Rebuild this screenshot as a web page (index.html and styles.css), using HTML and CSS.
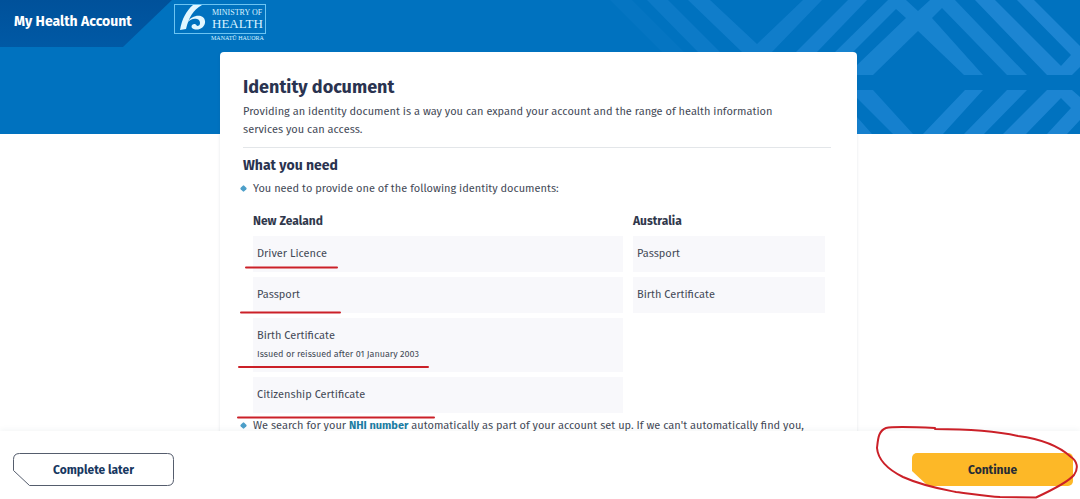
FILE: index.html
```html
<!DOCTYPE html>
<html lang="en">
<head>
<meta charset="utf-8">
<meta name="viewport" content="width=device-width, initial-scale=1">
<title>My Health Account – Identity document</title>
<link rel="stylesheet" href="styles.css">
</head>
<body>
<div class="app">
  <div class="hero" aria-hidden="true">
    <svg class="hero-pattern" width="480" height="134" viewBox="600 0 480 134">
      <g fill="#2e93e0">
        <path opacity=".1" d="M610 0H632L684 52H662Z"/>
        <path opacity=".25" d="M647 0H668L720 52H698Z"/>
        <path opacity=".35" d="M688 0H710L757 44L803 0H822L772 52H742Z"/>
        <path opacity=".45" d="M848 0H867L817 52H796Z"/>
        <path opacity=".5" d="M888 0H906L918 11L930 0H955L1027 75H1007L942 8L932 18L983 75H964L918 31L873 75H857V65L906 18L896 9L853 52H835Z"/>
        <path opacity=".6" d="M975 0H995L1061 66L1071 55L1017 0H1034L1080 46V67L1072 75H1047Z"/>
        <path opacity=".45" d="M857 90H873L913 134H893L857 98Z M857 117L872 134H857Z"/>
        <path opacity=".55" d="M965 90H983L943 134H923Z M1007 90H1027L984 134H964Z"/>
        <path opacity=".6" d="M1047 90H1072L1080 97V120L1067 134H1047L1071 108L1061 98L1026 134H1003Z"/>
      </g>
    </svg>
  </div>

  <header class="header">
    <a class="brand" href="#">My Health Account</a>
    <a class="ministry" href="#" aria-label="Ministry of Health, Manatū Hauora">
      <span class="ministry-box">
        <svg class="ministry-mark" width="28" height="26" viewBox="0 0 28 26" fill="#e2f7ff">
          <path d="M14 0H23C14 5 10 12 7 24L1 25C3 14 7 6 14 0Z"/>
          <path d="M9 17C12 10 25 8 26 16C27 23 18 27 13 23C11 20 16 17 18 21C22 21 22 15 18 14C14 13 11 15 9 17Z"/>
        </svg>
        <span class="ministry-name"><span class="ministry-small">MINISTRY OF</span><span class="ministry-big">HEALTH</span></span>
      </span>
      <span class="ministry-maori">MANATŪ HAUORA</span>
    </a>
  </header>

  <main class="main">
    <section class="card">
      <h1 class="title">Identity document</h1>
      <p class="lead">Providing an identity document is a way you can expand your account and the range of health information <br>services you can access.</p>
      <hr class="rule">
      <h2 class="subtitle">What you need</h2>
      <ul class="needs">
        <li class="need">
          You need to provide one of the following identity documents:
          <div class="countries">
            <section class="country">
              <h3 class="country-name">New Zealand</h3>
              <ul class="docs">
                <li class="doc">Driver Licence</li>
                <li class="doc">Passport</li>
                <li class="doc">Birth Certificate<small class="doc-note">Issued or reissued after 01 January 2003</small></li>
                <li class="doc">Citizenship Certificate</li>
              </ul>
            </section>
            <section class="country">
              <h3 class="country-name">Australia</h3>
              <ul class="docs">
                <li class="doc">Passport</li>
                <li class="doc">Birth Certificate</li>
              </ul>
            </section>
          </div>
        </li>
        <li class="need">We search for your <a class="link" href="#">NHI number</a> automatically as part of your account set up. If we can't automatically find you,</li>
      </ul>
    </section>
  </main>

  <footer class="footer">
    <button class="button button-later" type="button">
      <svg class="button-shape" width="161" height="33" viewBox="0 0 161 33" preserveAspectRatio="none" aria-hidden="true"><path d="M6.500 .5H154.500Q160.500 .5 160.500 6.500V26.500Q160.500 32.500 154.500 32.500H16.500L.5 17.500V6.500Q.5 .5 6.500 .5Z" fill="#fff" stroke="#555d6d"/></svg>
      <span class="button-label">Complete later</span>
    </button>
    <button class="button button-continue" type="button"><span class="button-label">Continue</span></button>
  </footer>

  <svg class="marks" width="1080" height="499" viewBox="0 0 1080 499" fill="none" stroke="#cb2028" stroke-width="2" stroke-linecap="round" aria-hidden="true">
    <path d="M246 267.500H337M241 312.500H340M239 367H428M238 417.500H434"/>
    <path d="M935 428C915 427 894 426 886 428C878 431 878 440 877 448C878 460 889 470 903 477C923 486 941 489 956 492C973 494 988 496 1000 497L1036 497.500C1050 491 1068 482 1074 475C1079 468 1077 461 1071 457C1059 446 1041 439 1018 436C996 431 964 429 935 429"/>
  </svg>
</div>
</body>
</html>
```
FILE: styles.css
```css
* {
  box-sizing: border-box;
}

body {
  margin: 0;
  background: #fff;
  color: #434956;
  font: 11px/18px "Fira Sans", "Noto Sans", sans-serif;
}

h1, h2, h3, p, ul {
  margin: 0;
  padding: 0;
}

ul {
  list-style: none;
}

.app {
  position: relative;
  display: flex;
  flex-direction: column;
  height: 100vh;
  overflow: hidden;
}

.hero {
  position: absolute;
  inset: 0 0 auto;
  height: 134px;
  overflow: hidden;
  background: #0072bf;
}

.hero-pattern {
  position: absolute;
  top: 0;
  right: 0;
}

.header {
  position: relative;
  display: flex;
  align-items: flex-start;
  height: 52px;
  flex: none;
}

.brand {
  width: 172px;
  height: 47px;
  padding-left: 14px;
  background: linear-gradient(#00519a, #0059a5);
  clip-path: polygon(0 0, 100% 0, 123px 100%, 0 100%);
  color: #fff;
  font-size: 14px;
  font-weight: 700;
  line-height: 44px;
  text-decoration: none;
  white-space: nowrap;
}

.ministry {
  display: flex;
  flex-direction: column;
  margin: 4px 0 0 2px;
  color: #d9f3ff;
  font-family: "Liberation Serif", serif;
  text-decoration: none;
}

.ministry-box {
  display: flex;
  gap: 5px;
  width: 92px;
  height: 30px;
  padding-left: 4px;
  border: 1px solid #6cc4f2;
}

.ministry-name {
  display: flex;
  flex-direction: column;
  padding-top: 4px;
}

.ministry-small {
  font-size: 8px;
  line-height: 8px;
  white-space: nowrap;
}

.ministry-big {
  font-size: 13px;
  line-height: 13px;
}

.ministry-maori {
  padding-left: 37px;
  font-size: 6px;
  line-height: 9px;
  white-space: nowrap;
}

.main {
  position: relative;
  flex: 1;
  min-height: 0;
  padding-right: 3px;
  overflow: hidden;
}

.card {
  max-width: 637px;
  margin: 0 auto;
  padding: 24px 26px 32px 23px;
  border-radius: 4px;
  background: #fff;
  box-shadow: 0 0 3px rgb(40 60 80 / 12%);
}

.title {
  color: #2a3350;
  font-size: 18px;
  line-height: 22px;
}

.lead {
  padding-top: 5px;
}

.rule {
  height: 1px;
  margin: 8px 0 9px;
  border: 0;
  background: #e3e6e9;
}

.subtitle {
  color: #2a3350;
  font-size: 14px;
  line-height: 18px;
}

.needs {
  padding-top: 5px;
}

.need {
  position: relative;
  padding-left: 10px;
}

.need::before {
  content: "";
  position: absolute;
  top: 6px;
  left: -2px;
  width: 5px;
  height: 5px;
  border-radius: 1px;
  background: #4d9fc9;
  transform: rotate(45deg);
}

.countries {
  display: grid;
  grid-template-columns: 370fr 192fr;
  gap: 10px;
  align-items: start;
  padding: 14px 6px 4px 0;
}

.country-name {
  color: #30384c;
  font-size: 12px;
  line-height: 18px;
}

.docs {
  display: flex;
  flex-direction: column;
  gap: 5px;
  padding-top: 6px;
}

.doc {
  padding: 9px 4px;
  background: #f8f8fb;
}

.doc-note {
  display: block;
  font-size: 9px;
}

.link {
  color: #1c7da3;
  font-weight: 700;
  text-decoration: none;
}

.footer {
  position: relative;
  display: flex;
  justify-content: space-between;
  align-items: flex-start;
  flex: none;
  padding: 22px 7px 13px 13px;
  background: #fff;
  box-shadow: 0 -1px 6px rgb(40 60 80 / 6%);
}

.button {
  position: relative;
  width: 161px;
  height: 33px;
  padding: 0;
  border: 0;
  background: none;
  font: 700 12px/18px "Fira Sans", "Noto Sans", sans-serif;
  cursor: pointer;
}

.button-shape {
  position: absolute;
  inset: 0;
}

.button-label {
  position: relative;
}

.button-later {
  color: #17375f;
}

.button-continue {
  border-radius: 5px;
  background: #fdb827;
  clip-path: polygon(0 0, 100% 0, 100% 100%, 16px 100%, 0 18px);
  color: #262b35;
}

.marks {
  position: absolute;
  top: 0;
  left: 0;
  pointer-events: none;
}
```
